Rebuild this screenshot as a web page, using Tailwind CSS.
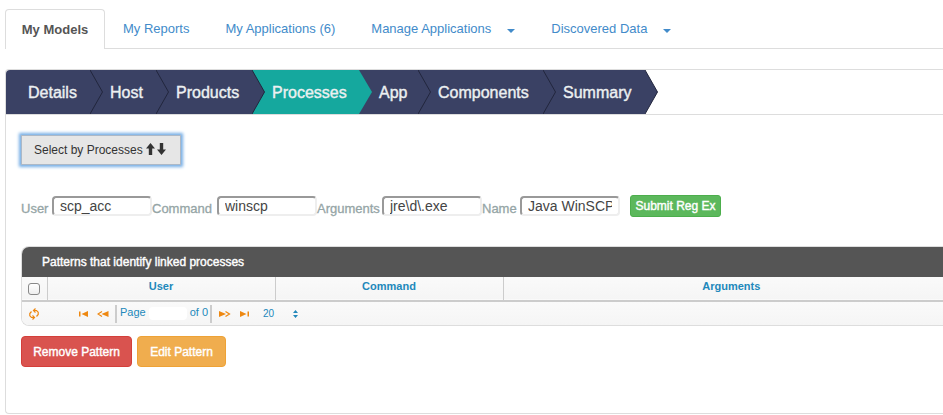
<!DOCTYPE html>
<html lang="en">
<head>
<meta charset="utf-8">
<title>My Models</title>
<script src="https://cdn.jsdelivr.net/npm/@tailwindcss/browser@4"></script>
</head>
<body class="overflow-x-hidden bg-white font-['Liberation_Sans',Arial,sans-serif] text-[13px] text-[#555555]">
<div class="pl-[5px] pt-[9px]">
  <nav class="flex h-10 border-b border-[#dddddd] text-[#428bca]">
    <a href="#" class="-mb-px flex h-10 w-[100px] items-center justify-center rounded-t border border-b-0 border-[#dddddd] bg-white font-bold text-[#555555]">My Models</a>
    <a href="#" class="flex items-center px-[18px]">My Reports</a>
    <a href="#" class="flex items-center px-[18px]">My Applications (6)</a>
    <a href="#" class="flex items-center gap-4 px-[18px]">Manage Applications
      <svg class="mt-1 h-1 w-2" viewBox="0 0 8 4" fill="currentColor"><path d="M0 0H8L4 4Z"/></svg></a>
    <a href="#" class="flex items-center gap-4 px-[18px]">Discovered Data
      <svg class="mt-1 h-1 w-2" viewBox="0 0 8 4" fill="currentColor"><path d="M0 0H8L4 4Z"/></svg></a>
  </nav>

  <main class="mt-5 rounded-l border border-r-0 border-[#dddddd] pb-[46px]">
    <ol class="flex h-[45px] border-b border-[#dddddd] text-base text-[#ecf0f1] [-webkit-text-stroke:0.4px_#ecf0f1] [&_a]:pt-0.5">
      <li class="flex h-11"><a href="#" class="flex w-[84px] items-center rounded-tl-sm bg-[#3a4164] pl-[22px]">Details</a><svg class="h-11 w-[13px] bg-[#3a4164]" viewBox="0 0 13 44"><path d="M0 0L12.5 22L0 44" fill="#3a4164" stroke="#22263d"/></svg></li>
      <li class="flex h-11"><a href="#" class="flex w-[53px] items-center bg-[#3a4164] pl-[7px]">Host</a><svg class="h-11 w-[13px] bg-[#3a4164]" viewBox="0 0 13 44"><path d="M0 0L12.5 22L0 44" fill="#3a4164" stroke="#22263d"/></svg></li>
      <li class="flex h-11"><a href="#" class="flex w-[83px] items-center bg-[#3a4164] pl-[7px]">Products</a><svg class="h-11 w-[13px] bg-[#15a89e]" viewBox="0 0 13 44"><path d="M0 0L12.5 22L0 44" fill="#3a4164" stroke="#22263d"/></svg></li>
      <li class="flex h-11"><a href="#" aria-current="step" class="flex w-[94px] items-center bg-[#15a89e] pl-[7px]">Processes</a><svg class="h-11 w-[13px] bg-[#3a4164]" viewBox="0 0 13 44"><path d="M0 0L13 22L0 44" fill="#15a89e"/></svg></li>
      <li class="flex h-11"><a href="#" class="flex w-[46px] items-center bg-[#3a4164] pl-[7px]">App</a><svg class="h-11 w-[13px] bg-[#3a4164]" viewBox="0 0 13 44"><path d="M0 0L12.5 22L0 44" fill="#3a4164" stroke="#22263d"/></svg></li>
      <li class="flex h-11"><a href="#" class="flex w-[112px] items-center bg-[#3a4164] pl-[7px]">Components</a><svg class="h-11 w-[13px] bg-[#3a4164]" viewBox="0 0 13 44"><path d="M0 0L12.5 22L0 44" fill="#3a4164" stroke="#22263d"/></svg></li>
      <li class="flex h-11"><a href="#" class="flex w-[89px] items-center bg-[#3a4164] pl-[7px]">Summary</a><svg class="h-11 w-[13px]" viewBox="0 0 13 44"><path d="M0 0L12.5 22L0 44" fill="#3a4164" stroke="#22263d"/></svg></li>
    </ol>

    <div class="pl-[15px] pt-5">
      <button type="button" class="flex h-[30px] w-40 items-center gap-[3px] border border-[#adb8c6] bg-[#e6e6e6] pl-3 text-xs text-[#333333] shadow-[0_0_3px_2px_#76aee5]">Select by Processes
        <svg class="mb-0.5 h-3 w-5" viewBox="0 0 20 12" fill="#333333"><path d="M4.500 0L9 5.500H6.200V12H2.800V5.500H0ZM13.800 0H17.200V6.500H20L15.500 12L11 6.500H13.800Z"/></svg>
      </button>

      <form class="mt-[30px] flex h-[22px] items-center text-[#95a5a6] [&_label]:pt-1.5 [&_label]:[-webkit-text-stroke:0.3px_#95a5a6]">
        <label for="user" class="w-[31px]">User</label>
        <input id="user" value="scp_acc" class="h-5 w-[100px] rounded border-2 border-b-[#eeeeee] border-l-[#999999] border-r-[#eeeeee] border-t-[#999999] px-1.5 text-sm text-[#444444]">
        <label for="command" class="w-[65px]">Command</label>
        <input id="command" value="winscp" class="h-5 w-[100px] rounded border-2 border-b-[#eeeeee] border-l-[#999999] border-r-[#eeeeee] border-t-[#999999] px-1.5 text-sm text-[#444444]">
        <label for="arguments" class="w-[65px]">Arguments</label>
        <input id="arguments" value="jre\d\.exe" class="h-5 w-[100px] rounded border-2 border-b-[#eeeeee] border-l-[#999999] border-r-[#eeeeee] border-t-[#999999] px-1.5 text-sm text-[#444444]">
        <label for="name" class="w-[38px]">Name</label>
        <input id="name" value="Java WinSCP" class="h-5 w-[100px] rounded border-2 border-b-[#eeeeee] border-l-[#999999] border-r-[#eeeeee] border-t-[#999999] px-1.5 text-sm text-[#444444]">
        <button type="button" class="ml-2.5 h-[22px] w-[91px] rounded-[3px] border border-[#4cae4c] bg-[#5cb85c] text-xs whitespace-nowrap text-white [-webkit-text-stroke:0.4px_#ffffff]">Submit Reg Ex</button>
      </form>

      <section class="mt-[29px] overflow-hidden rounded-l-lg border border-r-0 border-[#dddddd]">
        <h2 class="flex h-[30px] items-center bg-[#555555] pl-5 text-xs text-white [-webkit-text-stroke:0.4px_#ffffff]">Patterns that identify linked processes</h2>
        <table class="w-full table-fixed border-collapse text-[11px] text-[#2288bb]">
          <thead><tr class="h-6 border-b-2 border-[#cccccc] bg-linear-to-b from-[#fafafa] to-[#f5f5f5]">
            <th class="w-[25px] border-r border-[#cccccc] p-0"><input type="checkbox" aria-label="Select all" class="mx-auto block size-3 appearance-none rounded-[3px] border border-[#888888] bg-linear-to-b from-white to-[#eeeeee]"></th>
            <th class="w-[228px] border-r border-[#cccccc] p-0 pb-1">User</th>
            <th class="w-[228px] border-r border-[#cccccc] p-0 pb-1">Command</th>
            <th class="p-0 pb-1 pl-4">Arguments</th>
          </tr></thead>
        </table>
        <div class="flex h-[23px] items-center bg-linear-to-b from-[#fafafa] to-[#f5f5f5] pl-[7px] text-[11px] text-[#2288bb]">
          <button type="button" aria-label="Refresh" class="mr-10"><svg class="h-3 w-[10px]" viewBox="0 0 10 12" fill="none" stroke="#ee8811" stroke-width="1.200"><path d="M6.500 .500L4.500 2.500L6.500 4.500M4.500 2.500H7.500L9.200 4.200V6.500L7.500 8.500M3.500 11.500L5.500 9.500L3.500 7.500M5.500 9.500H2.500L.8 7.800V5.500L2.500 3.500"/></svg></button>
          <button type="button" aria-label="First page" class="mr-[9px]"><svg class="h-[6px] w-[9px]" viewBox="0 0 9 6" fill="#ee8811"><path d="M0 .500H1.500V5.500H0ZM9 0V6L2.500 3Z"/></svg></button>
          <button type="button" aria-label="Previous page" class="mr-1.5"><svg class="h-[6px] w-[12px]" viewBox="0 0 12 6" fill="#ee8811"><path d="M11.500 0V6L4.500 3Z"/><path d="M5 .500L1 3L5 5.500" fill="none" stroke="#ee8811" stroke-width="1.200"/></svg></button>
          <label for="page" class="flex h-[18px] items-center border-l-2 border-[#cccccc] pl-[3px] pb-0.5">Page</label>
          <input id="page" class="mx-[3px] h-[13px] w-[38px] rounded bg-white">
          <span class="flex h-[18px] items-center border-r-2 border-[#cccccc] pb-0.5 pr-[2px]">of 0</span>
          <button type="button" aria-label="Next page" class="mx-[7px]"><svg class="h-[6px] w-[12px]" viewBox="0 0 12 6" fill="#ee8811"><path d="M0 0V6L7 3Z"/><path d="M6.500 .500L10.500 3L6.500 5.500" fill="none" stroke="#ee8811" stroke-width="1.200"/></svg></button>
          <button type="button" aria-label="Last page" class="ml-0.5 mr-3.5"><svg class="h-[6px] w-[9px]" viewBox="0 0 9 6" fill="#ee8811"><path d="M7.500 .500H9V5.500H7.500ZM0 0V6L6.500 3Z"/></svg></button>
          <select aria-label="Rows per page" class="w-[30px] appearance-none bg-transparent text-[10px]"><option>20</option></select>
          <svg class="h-2 w-[5px]" viewBox="0 0 5 8" fill="#2288bb"><path d="M2.500 0L5 3H0ZM2.500 8L0 5H5Z"/></svg>
        </div>
      </section>

      <div class="mt-2.5 flex gap-[5px] text-xs text-white [-webkit-text-stroke:0.4px_#ffffff]">
        <button type="button" class="h-[31px] w-[111px] rounded border border-[#d43f3a] bg-[#d9534f]">Remove Pattern</button>
        <button type="button" class="h-[31px] w-[89px] rounded border border-[#eea236] bg-[#f0ad4e]">Edit Pattern</button>
      </div>
    </div>
  </main>
</div>
</body>
</html>
